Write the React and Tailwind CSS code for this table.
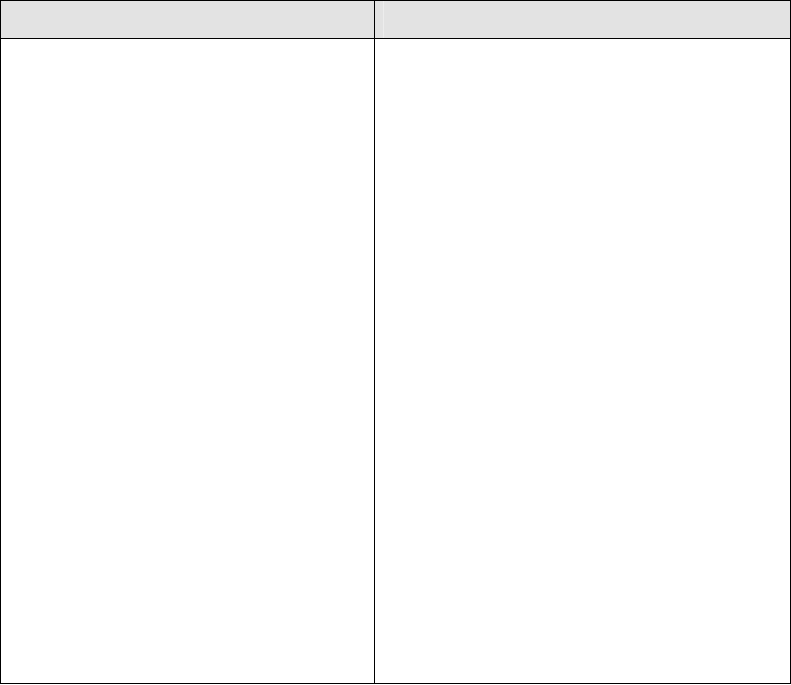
export default function App() {
    return (
        <div className="w-[791px] h-[685px] bg-white">
            <div className="w-[791px] h-[684px] border border-black flex flex-col">
                <div className="flex h-[38px] border-b border-black bg-[#e3e3e3]">
                    <div className="w-[374px] border-r border-black"></div>
                    <div className="flex-1 pl-2">
                        <div className="h-full border-l border-[#ededed]"></div>
                    </div>
                </div>
                <div className="flex flex-1">
                    <div className="w-[374px] border-r border-black"></div>
                    <div className="flex-1"></div>
                </div>
            </div>
        </div>
    )
}
